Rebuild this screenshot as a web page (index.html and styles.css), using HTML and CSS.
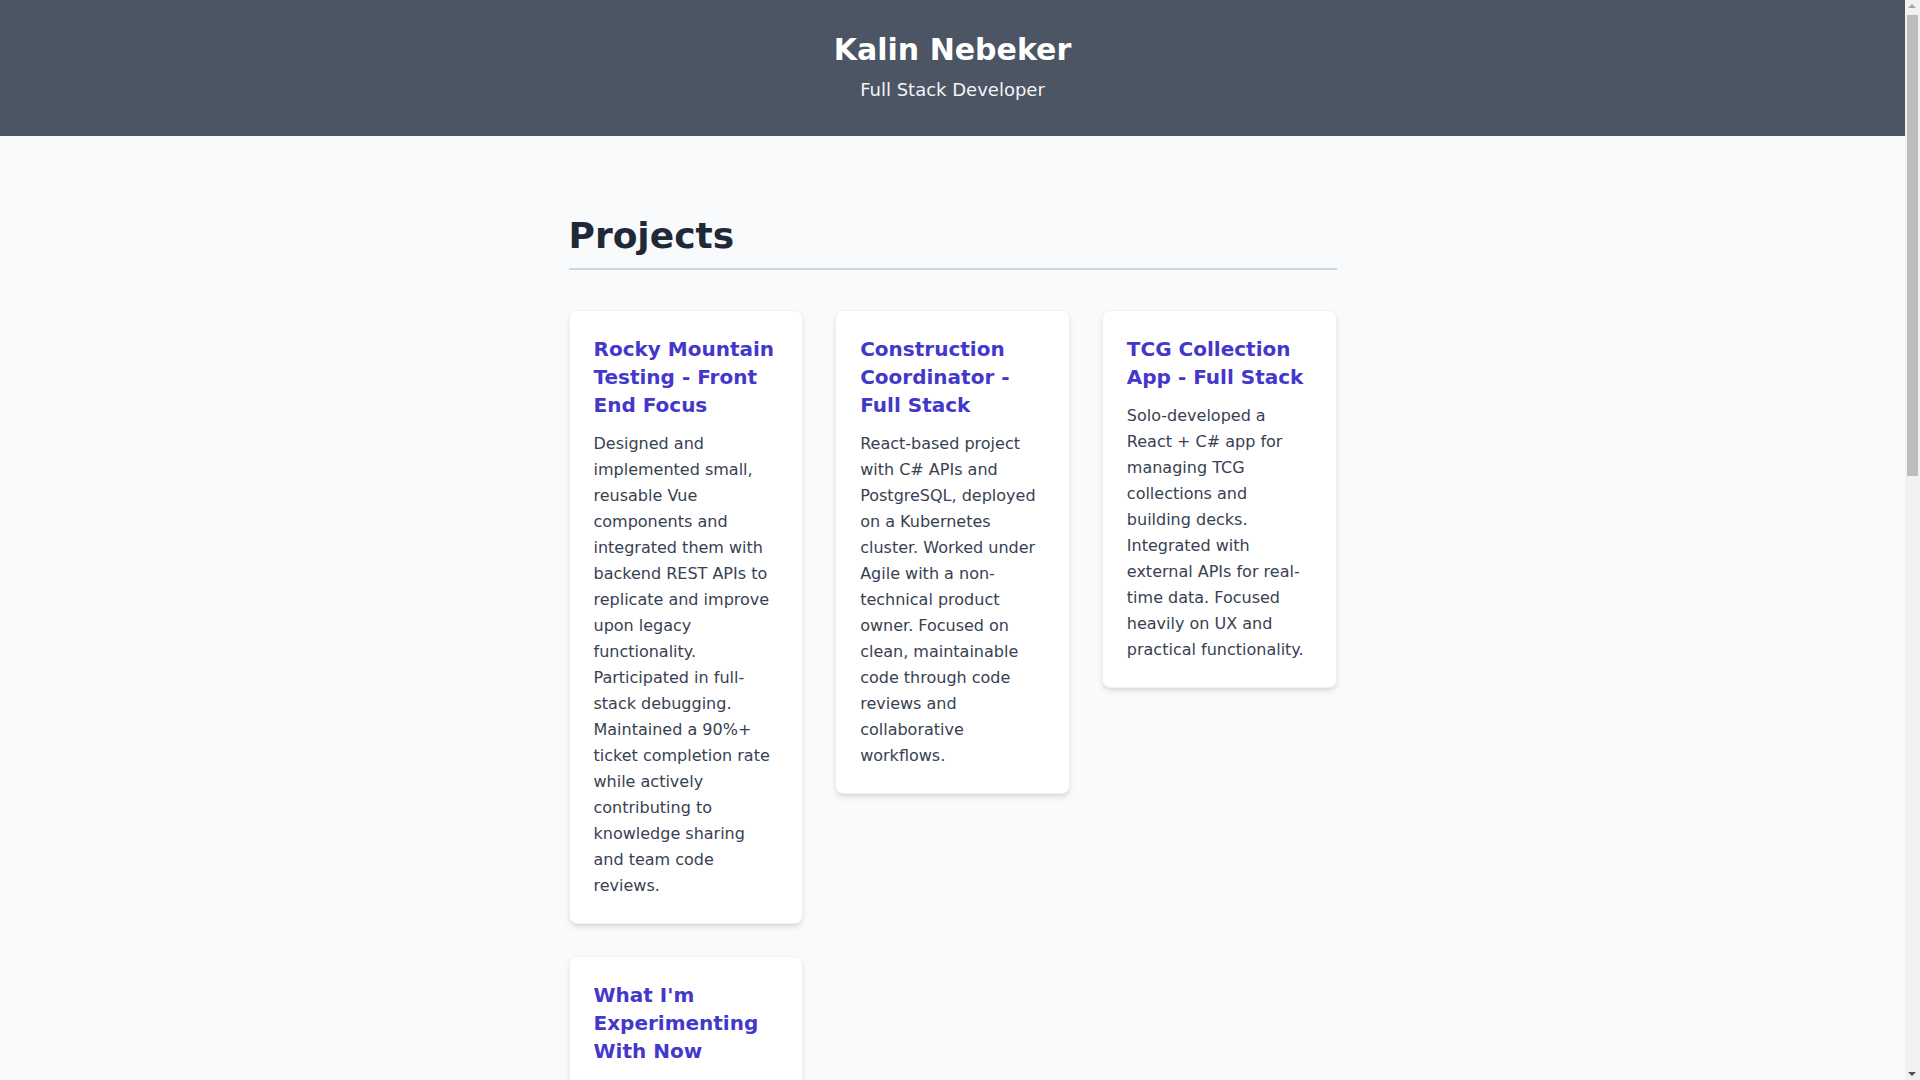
FILE: index.html
```html
<!DOCTYPE html>
<html lang="en">
<head>
<meta charset="utf-8">
<title>Kalin Nebeker</title>
<link rel="stylesheet" href="styles.css">
</head>
<body>
<header class="site-header">
  <h1 class="site-title">Kalin Nebeker</h1>
  <p class="site-subtitle">Full Stack Developer</p>
</header>
<main class="main">
  <section class="section">
    <h2 class="section-title">Projects</h2>
    <div class="grid">
      <article class="card">
        <h3 class="card-title">Rocky Mountain Testing - Front End Focus</h3>
        <p class="card-text">Designed and implemented small, reusable Vue components and integrated them with backend REST APIs to replicate and improve upon legacy functionality. Participated in full-stack debugging. Maintained a 90%+ ticket completion rate while actively contributing to knowledge sharing and team code reviews.</p>
      </article>
      <article class="card">
        <h3 class="card-title">Construction Coordinator - Full Stack</h3>
        <p class="card-text">React-based project with C# APIs and PostgreSQL, deployed on a Kubernetes cluster. Worked under Agile with a non-technical product owner. Focused on clean, maintainable code through code reviews and collaborative workflows.</p>
      </article>
      <article class="card">
        <h3 class="card-title">TCG Collection App - Full Stack</h3>
        <p class="card-text">Solo-developed a React + C# app for managing TCG collections and building decks. Integrated with external APIs for real-time data. Focused heavily on UX and practical functionality.</p>
      </article>
      <article class="card">
        <h3 class="card-title">What I'm Experimenting With Now</h3>
        <p class="card-text">Exploring AI-assisted development workflows, building small tools with modern frameworks, and experimenting with cloud deployments and containerized services.</p>
      </article>
    </div>
  </section>
  <section class="section">
    <h2 class="section-title">Skills</h2>
    <div class="grid">
      <article class="card">
        <h3 class="card-title">Front End</h3>
        <p class="card-text">React, Vue, JavaScript, TypeScript, HTML, CSS, Tailwind.</p>
      </article>
      <article class="card">
        <h3 class="card-title">Back End</h3>
        <p class="card-text">C#, .NET, REST APIs, PostgreSQL, SQL Server.</p>
      </article>
      <article class="card">
        <h3 class="card-title">Tools</h3>
        <p class="card-text">Git, Docker, Kubernetes, Agile, code reviews.</p>
      </article>
    </div>
  </section>
  <section class="section">
    <h2 class="section-title">Contact</h2>
    <p class="contact-text">Feel free to reach out about opportunities or collaboration.</p>
  </section>
</main>
<footer class="site-footer">© Kalin Nebeker</footer>
<div class="scrollbar" aria-hidden="true">
  <span class="scroll-arrow scroll-up"></span>
  <span class="scroll-thumb"></span>
  <span class="scroll-arrow scroll-down"></span>
</div>
</body>
</html>
```

FILE: styles.css
```css
* {
  box-sizing: border-box;
}

html,
body {
  margin: 0;
  padding: 0;
}

body {
  background: #f9fafb;
  color: #1f2937;
  font-family: "DejaVu Sans", sans-serif;
  padding-right: 15px;
}

.site-header {
  background: #4b5563;
  color: #ffffff;
  text-align: center;
  padding: 32px 16px;
}

.site-title {
  margin: 0;
  font-size: 30px;
  line-height: 36px;
  font-weight: 700;
}

.site-subtitle {
  margin: 8px 0 0;
  font-size: 18px;
  line-height: 28px;
  color: #f3f4f6;
}

.main {
  max-width: 768px;
  margin: 0 auto;
  padding: 80px 0 48px;
}

.section {
  margin-bottom: 64px;
}

.section-title {
  margin: 0 0 40px;
  font-size: 36px;
  line-height: 40px;
  font-weight: 700;
  color: #1f2937;
  padding-bottom: 12px;
  border-bottom: 2px solid #d1d5db;
}

.grid {
  display: grid;
  grid-template-columns: repeat(3, 1fr);
  gap: 32px;
  align-items: start;
}

.card {
  background: #ffffff;
  border: 1px solid #f0f1f3;
  border-radius: 8px;
  box-shadow: 0 4px 6px -1px rgba(0, 0, 0, 0.1), 0 2px 4px -2px rgba(0, 0, 0, 0.1);
  padding: 24px;
}

.card-title {
  margin: 0 0 12px;
  font-size: 20px;
  line-height: 28px;
  font-weight: 700;
  color: #4338ca;
}

.card-text {
  margin: 0;
  font-size: 16px;
  line-height: 26px;
  color: #374151;
}

.contact-text {
  margin: 0;
  font-size: 16px;
  line-height: 26px;
  color: #374151;
}

.site-footer {
  text-align: center;
  padding: 32px 16px;
  color: #6b7280;
  font-size: 14px;
}

/* simulated browser scrollbar */
.scrollbar {
  position: fixed;
  top: 0;
  right: 0;
  width: 15px;
  height: 100vh;
  background: #f1f1f1;
}

.scroll-thumb {
  position: absolute;
  top: 15px;
  left: 2px;
  width: 11px;
  height: 461px;
  background: #bdbdbd;
}

.scroll-arrow {
  position: absolute;
  left: 3px;
  width: 0;
  height: 0;
  border-left: 4.5px solid transparent;
  border-right: 4.5px solid transparent;
}

.scroll-up {
  top: 4px;
  border-bottom: 4px solid #a3a3a3;
}

.scroll-down {
  bottom: 4px;
  border-top: 4px solid #505050;
}
```
